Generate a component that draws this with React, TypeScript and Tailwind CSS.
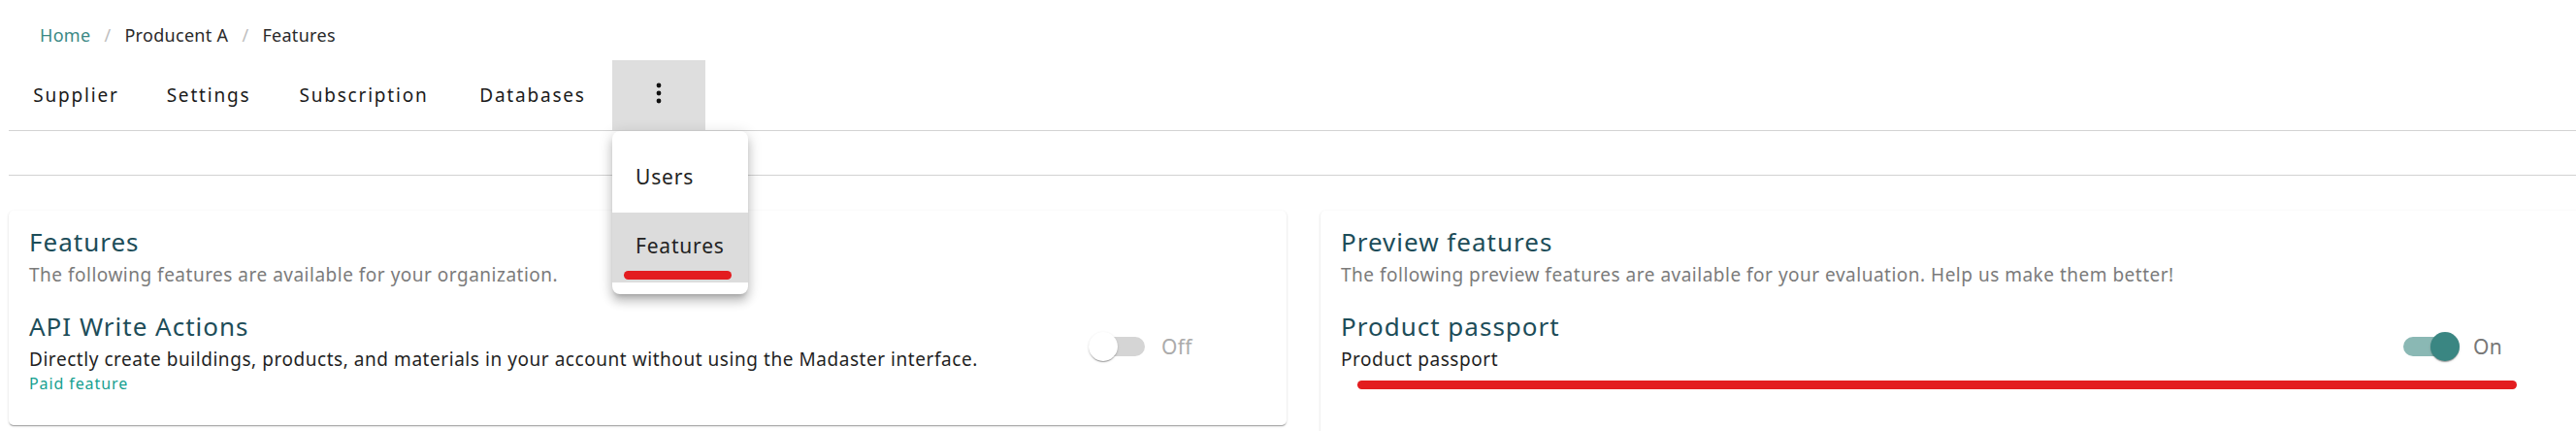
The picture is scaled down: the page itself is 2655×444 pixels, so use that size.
import React from "react";

const font = { fontFamily: '"Noto Sans", "Open Sans", Arial, sans-serif' };

function Switch({ on }: { on: boolean }) {
  return (
    <div className="relative w-[61px] h-[30px] shrink-0">
      <div
        className={
          "absolute left-[3px] top-[5px] w-[55px] h-[20px] rounded-full " +
          (on ? "bg-[#8ab8b4]" : "bg-[#d5d5d5]")
        }
      />
      <div
        className={
          "absolute top-0 w-[30px] h-[30px] rounded-full shadow-[0_2px_1px_-1px_rgba(0,0,0,0.2),0_1px_1px_0_rgba(0,0,0,0.14),0_1px_3px_0_rgba(0,0,0,0.12)] " +
          (on ? "right-0 bg-[#3a8682]" : "left-0 bg-white")
        }
      />
    </div>
  );
}

function FeatureCard({
  title,
  subtitle,
  name,
  desc,
  paid,
  on,
  annotate,
}: {
  title: string;
  subtitle: string;
  name: string;
  desc: string;
  paid?: boolean;
  on: boolean;
  annotate?: boolean;
}) {
  return (
    <div className="w-[1317px] shrink-0 bg-white rounded-[5px] px-[21px] pt-[17px] pb-[33px] shadow-[0_2px_1px_-1px_rgba(0,0,0,0.2),0_1px_1px_0_rgba(0,0,0,0.14),0_1px_3px_0_rgba(0,0,0,0.12)]">
      <div className="text-[26px] leading-[30px] tracking-[1px] text-[#1d4d59]">{title}</div>
      <div className="mt-[7px] text-[19px] leading-[24px] tracking-[0.5px] text-[#7b7b7b]">{subtitle}</div>
      <div className="mt-[26px] flex items-start">
        <div className="flex-1">
          <div className="text-[26px] leading-[30px] tracking-[1px] text-[#1d4d59]">{name}</div>
          <div className="mt-[7px] text-[19px] leading-[24px] tracking-[0.55px] text-[#1f1f1f]">{desc}</div>
          {paid && (
            <div className="mt-[3px] text-[16px] leading-[20px] tracking-[0.9px] text-[#16a090]">Paid feature</div>
          )}
        </div>
        <div className="w-[183px] shrink-0 mt-[21px] flex items-center">
          <Switch on={on} />
          <span
            className={
              "ml-[14px] text-[21px] leading-[30px] tracking-[0.3px] " + (on ? "text-[#777777]" : "text-[#ababab]")
            }
          >
            {on ? "On" : "Off"}
          </span>
        </div>
      </div>
      {annotate && (
        <div className="mt-[10px] ml-[17px] w-[1195px] h-[9px] rounded-full bg-[#e31c1f]" />
      )}
      {annotate && <div className="h-[120px]" />}
    </div>
  );
}

export default function App() {
  const tabs: { label: string; w: string }[] = [
    { label: "Supplier", w: "w-[139px]" },
    { label: "Settings", w: "w-[134px]" },
    { label: "Subscription", w: "w-[186px]" },
    { label: "Databases", w: "w-[162px]" },
  ];
  return (
    <div className="w-full h-[444px] overflow-hidden bg-white" style={font}>
      <div className="w-[2700px] pl-[9px]">
        {/* breadcrumb */}
        <nav className="h-[62px] pt-[24px] pl-[32px] flex items-start text-[18px] leading-[24px] tracking-[0.3px]">
          <span className="text-[#3b8985]">Home</span>
          <span className="mx-[14px] text-[#bdbdbd]">/</span>
          <span className="text-[#2a2a2a]">Producent A</span>
          <span className="mx-[14px] text-[#bdbdbd]">/</span>
          <span className="text-[#2a2a2a]">Features</span>
        </nav>

        {/* tabs */}
        <div className="h-[73px] border-b border-[#d3d3d3] flex items-stretch relative z-10">
          {tabs.map((t) => (
            <div
              key={t.label}
              className={
                t.w +
                " h-[72px] flex items-center justify-center text-[19px] tracking-[1.8px] text-[#1a1a1a]"
              }
            >
              {t.label}
            </div>
          ))}
          <div className="relative ml-[1px] w-[96px] h-[72px] bg-[#dedede]">
            <div className="w-full h-full flex items-center justify-center pb-[4px]">
              <svg width="24" height="24" viewBox="0 0 24 24" fill="#111">
                <circle cx="12" cy="4" r="2.4" />
                <circle cx="12" cy="12" r="2.4" />
                <circle cx="12" cy="20" r="2.4" />
              </svg>
            </div>
            {/* dropdown menu */}
            <div className="absolute left-0 top-[73px] w-[140px] py-[12px] bg-white rounded-[8px] shadow-[0_5px_5px_-3px_rgba(0,0,0,0.2),0_8px_10px_1px_rgba(0,0,0,0.14),0_3px_14px_2px_rgba(0,0,0,0.12)]">
              <div className="h-[72px] px-[24px] flex items-center text-[21px] tracking-[0.8px] text-[#222]">Users</div>
              <div className="relative h-[72px] px-[24px] flex items-center text-[21px] tracking-[0.8px] text-[#222] bg-[#dcdcdc]">
                <span className="-mt-[2px]">Features</span>
                <div className="absolute left-[12px] top-[60px] w-[111px] h-[9px] rounded-full bg-[#e31c1f]" />
              </div>
            </div>
          </div>
        </div>

        {/* secondary bar */}
        <div className="h-[46px] border-b border-[#d3d3d3]" />

        {/* cards */}
        <div className="mt-[36px] flex gap-[35px] items-start">
          <FeatureCard
            title="Features"
            subtitle="The following features are available for your organization."
            name="API Write Actions"
            desc="Directly create buildings, products, and materials in your account without using the Madaster interface."
            paid
            on={false}
          />
          <FeatureCard
            title="Preview features"
            subtitle="The following preview features are available for your evaluation. Help us make them better!"
            name="Product passport"
            desc="Product passport"
            on
            annotate
          />
        </div>
      </div>
    </div>
  );
}
